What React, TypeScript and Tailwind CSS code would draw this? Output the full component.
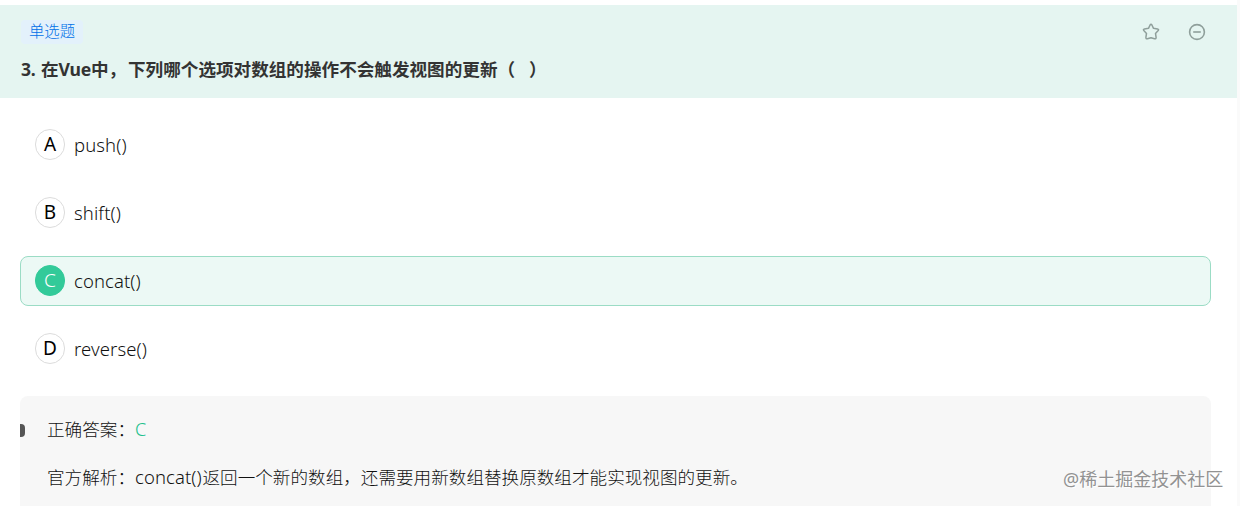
import { clsx } from 'clsx';

const options = [
  { key: 'A', text: 'push()' },
  { key: 'B', text: 'shift()' },
  { key: 'C', text: 'concat()' },
  { key: 'D', text: 'reverse()' },
];

const answer = 'C';

function StarIcon() {
  return (
    <svg width="18" height="18" viewBox="0 0 18 18" fill="none" stroke="#8f9f9b" strokeWidth="1.5" strokeLinejoin="round">
      <path d="M8.1 2Q9 .5 9.9 2L11.5 5.3L15.5 5.9Q17.2 6.4 16.2 7.6L13.5 10.4L14.1 14.4Q14.1 16.2 12.6 15.7L9 14.7L5.4 15.7Q3.9 16.2 3.9 14.4L4.5 10.4L1.8 7.6Q.8 6.4 2.5 5.9L6.5 5.3Z" />
    </svg>
  );
}

function MinusIcon() {
  return (
    <svg width="18" height="18" viewBox="0 0 18 18" fill="none" stroke="#8f9f9b" strokeWidth="1.6">
      <circle cx="9" cy="9" r="7.4" />
      <path d="M5.2 9H12.8" />
    </svg>
  );
}

export default function App() {
  return (
    <div className="flex h-[506px] overflow-hidden bg-[#fafafa] font-['Noto_Sans','Noto_Sans_CJK_SC',sans-serif]">
      <div className="relative w-[1237px] bg-white pt-[5px]">
        <header className="flex h-[93px] justify-between bg-[#e5f5f1] pr-[31px] pl-[21px]">
          <div>
            <div className="mt-[15px] flex h-6 w-[62px] items-center justify-center rounded bg-[#e3f1fb] text-[15.4px] font-light text-[#0070e8]">
              单选题
            </div>
            <h1 className="mt-3 text-[17.6px] leading-[26px] font-bold whitespace-pre text-[#333]">
              <span className="inline-block w-5 tracking-[-0.4px]">3. </span>
              <span className="inline-block w-[87px] tracking-[-0.2px]">在Vue中，</span>
              下列哪个选项对数组的操作不会触发视图的更新（<span className="inline-block w-3.5" />）
            </h1>
          </div>
          <div className="mt-[18px] flex h-[18px] gap-7">
            <StarIcon />
            <MinusIcon />
          </div>
        </header>

        <ul className="mt-[22px] mr-[26px] ml-5 space-y-[18px]">
          {options.map(({ key, text }) => (
            <li
              key={key}
              className={clsx(
                'flex h-[50px] items-center rounded-lg border pl-3.5',
                key === answer ? 'border-[#9bdcc5] bg-[#ecf9f5]' : 'border-transparent'
              )}
            >
              <span
                className={clsx(
                  'mb-px flex h-[31px] w-[30px] items-center justify-center rounded-full border pb-px text-[19px] leading-none',
                  key === answer ? 'border-[#32ca99] bg-[#32ca99] font-light text-white' : 'border-[#dcdcdc] text-black'
                )}
              >
                {key}
              </span>
              <span className="ml-[9px] text-[18.5px] leading-6 font-light tracking-[0.1px] text-[#111]">{text}</span>
            </li>
          ))}
        </ul>

        <section className="relative mt-[22px] mr-[26px] ml-5 h-[130px] overflow-hidden rounded-lg bg-[#f7f7f7] pt-5 pl-[27px] text-[17.6px] leading-[26px] font-light text-[#111]">
          <span className="absolute top-7 left-0 h-[13px] w-[5px] rounded-r bg-[#555]" />
          <p>
            正确答案：<span className="text-[18px] text-[#20c08c]">C</span>
          </p>
          <p className="mt-[22px] whitespace-nowrap">
            官方解析：<span className="inline-block w-[67.5px] text-[18.5px] leading-none tracking-[0.1px]">concat()</span>返回一个新的数组，还需要用新数组替换原数组才能实现视图的更新。
          </p>
        </section>

        <div className="absolute top-[466px] left-[1063px] text-[18px] leading-[26px] whitespace-nowrap text-[#929292] [text-shadow:1px_1px_0_#fff]">
          @稀土掘金技术社区
        </div>
      </div>
    </div>
  );
}
